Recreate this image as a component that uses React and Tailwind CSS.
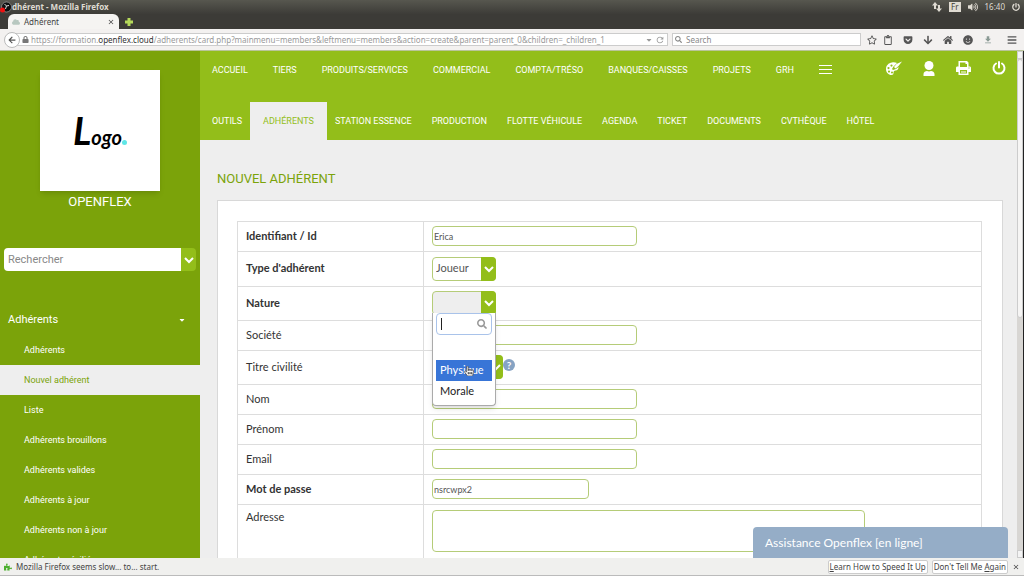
import React, { useState } from "react";
import {
  FaLock,
  FaRegStar,
  FaRegClipboard,
  FaGetPocket,
  FaArrowDown,
  FaHome,
  FaCaretDown,
  FaBars,
  FaSearch,
  FaPuzzlePiece,
  FaArrowLeft,
  FaVolumeUp,
  FaPowerOff,
  FaHandPointer,
  FaSmile,
  FaCloud,
} from "react-icons/fa";
import { MdClose, MdRefresh, MdFileDownload } from "react-icons/md";

const mainLinks = [
  "ACCUEIL",
  "TIERS",
  "PRODUITS/SERVICES",
  "COMMERCIAL",
  "COMPTA/TRÉSO",
  "BANQUES/CAISSES",
  "PROJETS",
  "GRH",
];

const subLinks = [
  "OUTILS",
  "ADHÉRENTS",
  "STATION ESSENCE",
  "PRODUCTION",
  "FLOTTE VÉHICULE",
  "AGENDA",
  "TICKET",
  "DOCUMENTS",
  "CVTHÈQUE",
  "HÔTEL",
];

const sideLinks = [
  "Adhérents",
  "Nouvel adhérent",
  "Liste",
  "Adhérents brouillons",
  "Adhérents valides",
  "Adhérents à jour",
  "Adhérents non à jour",
  "Adhérents résiliés",
];

const inputClass =
  "block h-5 rounded-[4px] border border-[#b5cc78] bg-white px-px text-[9px] text-[#555] outline-none";

const PaletteIcon = () => (
  <svg viewBox="0 0 32 28" className="h-3.5 w-4" fill="currentColor">
    <path
      fillRule="evenodd"
      d="M12 3C5 4 0 9 0 16c0 7 5 12 11 12 3 0 4-2 4-4 0-3 1-5 4-5 4 0 6-3 6-7l-5 4-6 2-2-2 3-5 7-7c-3-1-6-2-10-1ZM11 7a2.200 2.200 0 1 1 0 4.400 2.200 2.200 0 0 1 0-4.400ZM5 12a2.200 2.200 0 1 1 0 4.400 2.200 2.200 0 0 1 0-4.400ZM6 19a2.200 2.200 0 1 1 0 4.400 2.200 2.200 0 0 1 0-4.400ZM12 21a2 2 0 1 1 0 4 2 2 0 0 1 0-4Z"
    />
    <path d="M32 1 21 6l-5 6 3 3 6-5Z" />
  </svg>
);

const UserIcon = () => (
  <svg viewBox="0 0 24 30" className="h-[15px] w-3" fill="currentColor">
    <circle cx="12" cy="9" r="9" />
    <path d="M1 30v-4c0-4 4-6 7-6 2 1 6 1 8 0 3 0 7 2 7 6v4Z" />
  </svg>
);

const PrintIcon = () => (
  <svg viewBox="0 0 30 28" className="h-3.5 w-[15px]" fill="currentColor">
    <path
      fillRule="evenodd"
      d="M6 0h16l3 3v8h2c2 0 3 1 3 3v8h-5v6H5v-6H0v-8c0-2 1-3 3-3h2V0ZM8 3v9h14V6h-3V3ZM8 18v7h14v-7ZM25 13v2h2v-2Z"
    />
    <path d="M10 20h10v1H10zM10 23h10v1H10z" />
  </svg>
);

const PowerIcon = () => (
  <svg
    viewBox="0 0 28 28"
    className="h-3.5 w-3.5"
    fill="none"
    stroke="currentColor"
    strokeWidth="4"
    strokeLinecap="round"
  >
    <path d="M14 2v11M8 5a11 11 0 1 0 12 0" />
  </svg>
);

const NetworkIcon = () => (
  <svg viewBox="0 0 20 20" className="h-2.5 w-2.5" fill="currentColor">
    <path d="M6 0 0 7h4v7h4V7h4ZM14 20l6-7h-4V6h-4v7H8Z" />
  </svg>
);

const ChevronIcon = () => (
  <svg
    viewBox="0 0 10 8"
    className="h-2 w-2.5"
    fill="none"
    stroke="currentColor"
    strokeWidth="2"
  >
    <path d="M1 2l4 4 4-4" />
  </svg>
);

const BrowserBar = () => (
  <header className="shrink-0 font-['Noto_Sans','Open_Sans',sans-serif]">
    <div className="bg-linear-to-b from-[#57574f] to-[#3c3b37] to-50%">
      <div className="flex h-3.5 items-center justify-between pr-1 text-[8px] text-[#dfdbd2]">
        <div className="flex items-center font-bold">
          <svg viewBox="0 0 24 24" className="h-3 w-3">
            <circle cx="13" cy="12" r="10" fill="#111" stroke="#ccc" />
            <path d="M9 6l4 4 5-1M13 10l-2 6" stroke="#ddd" strokeWidth="2" fill="none" />
            <circle cx="5" cy="18" r="5" fill="#e11" />
          </svg>
          <span>dhérent - Mozilla Firefox</span>
        </div>
        <div className="flex items-center gap-[7px]">
          <NetworkIcon />
          <span className="flex h-2.5 items-center bg-[#dfdbd2] px-0.5 text-[8px] text-[#3c3b37]">Fr</span>
          <FaVolumeUp className="h-2.5 w-2.5" />
          <span>16:40</span>
          <FaPowerOff className="h-2 w-2" />
        </div>
      </div>
      <div className="flex h-[15px] items-center gap-1.5 pl-2">
        <div className="flex h-full w-[111px] items-center rounded-t-md bg-[#f5f4f2] px-1 text-[8px] text-[#444]">
          <FaCloud className="mr-1 h-2 w-2 text-[#b8c8c0]" />
          <span className="flex-1">Adhérent</span>
          <button aria-label="Fermer l'onglet">
            <MdClose className="h-2 w-2" />
          </button>
        </div>
        <button aria-label="Nouvel onglet" className="text-[#b5d95a]">
          <svg viewBox="0 0 8 8" className="h-2 w-2" stroke="currentColor" strokeWidth="3">
            <path d="M4 0v8M0 4h8" />
          </svg>
        </button>
      </div>
    </div>
    <div className="flex h-[22px] items-center border-b border-[#b9c49a] bg-[#f3f1f0] pr-[7px] pl-1 text-[#555]">
      <button
        aria-label="Retour"
        className="z-10 -mr-1 flex h-4 w-4 shrink-0 items-center justify-center rounded-full border border-[#bbb] bg-white"
      >
        <FaArrowLeft className="h-2 w-2" />
      </button>
      <div className="flex h-[13px] min-w-0 flex-1 items-center border border-[#ccc] bg-white pr-0.5 pl-[5px] text-[8px] text-[#999]">
        <FaLock className="mr-0.5 h-[7px] w-[7px] shrink-0 text-[#777]" />
        <span className="flex-1 whitespace-nowrap">
          https://formation.<span className="text-[#333]">openflex.cloud</span>
          /adherents/card.php?mainmenu=members&amp;leftmenu=members&amp;action=create&amp;parent=parent_0&amp;children=_children_1
        </span>
        <FaCaretDown className="mr-0.5 h-2 w-2" />
        <MdRefresh className="h-2.5 w-2.5" />
      </div>
      <div className="ml-1 flex h-[13px] w-[189px] items-center border border-[#ccc] bg-white px-0.5">
        <FaSearch className="mr-1 h-[7px] w-[7px] text-[#888]" />
        <input
          aria-label="Search"
          placeholder="Search"
          className="min-w-0 flex-1 text-[8px] outline-none placeholder:text-[#888]"
        />
      </div>
      <div className="ml-1.5 flex items-center gap-2.5">
        <FaRegStar className="h-2.5 w-2.5" />
        <FaRegClipboard className="-ml-1 h-2.5 w-2.5" />
        <FaGetPocket className="h-2.5 w-2.5" />
        <FaArrowDown className="h-2.5 w-2.5" />
        <FaHome className="h-2.5 w-2.5" />
        <FaSmile className="h-2.5 w-2.5" />
        <MdFileDownload className="h-2.5 w-2.5 text-[#8a9a94]" />
        <FaBars className="ml-1 h-2.5 w-2.5" />
      </div>
    </div>
  </header>
);

const Sidebar = () => (
  <aside className="flex w-[200px] shrink-0 flex-col bg-[#7ba30a] font-['Roboto',sans-serif] text-white">
    <div className="mx-auto mt-[19px] flex h-[121px] w-[120px] shrink-0 items-center justify-center bg-white shadow-md">
      <div className="flex items-baseline font-['Lato',sans-serif] font-bold text-black italic">
        <span className="text-[38px]">L</span>
        <span className="text-[20px]">ogo</span>
        <span className="h-[5px] w-[5px] rounded-full bg-[#5ee6e6]"></span>
      </div>
    </div>
    <p className="mt-px text-center text-[13px] leading-5">OPENFLEX</p>
    <div className="mx-1 mt-9 flex h-[23px] shrink-0 overflow-hidden rounded-[4px]">
      <input
        aria-label="Rechercher"
        placeholder="Rechercher"
        className="min-w-0 flex-1 bg-white px-1 pt-0.5 text-[11px] text-[#555] outline-none placeholder:text-[#888]"
      />
      <button
        aria-label="Lancer la recherche"
        className="flex w-[15px] items-center justify-center bg-[#93be1a]"
      >
        <ChevronIcon />
      </button>
    </div>
    <button className="mt-8 flex h-8 shrink-0 items-center justify-between px-2 pt-0.5 text-[11px]">
      Adhérents
      <FaCaretDown className="mr-1.5 h-2 w-2" />
    </button>
    <nav>
      {sideLinks.map((link, index) => (
        <a
          key={link}
          href="#"
          className={`flex h-[30px] items-center pt-0.5 pl-6 text-[9px] ${
            index === 1 ? "bg-[#eee] text-[#7ba30a]" : ""
          }`}
        >
          {link}
        </a>
      ))}
    </nav>
  </aside>
);

const TopNav = () => (
  <div className="h-[89px] shrink-0 bg-[#93be1a] pl-3 font-['Roboto',sans-serif] text-[9px] whitespace-nowrap text-white">
    <div className="flex h-[51px] items-start justify-between pr-[11px]">
      <nav className="flex h-10 items-center gap-[25px]">
        {mainLinks.map((link) => (
          <a key={link} href="#">
            {link}
          </a>
        ))}
        <button aria-label="Plus de menus" className="pb-1">
          <svg viewBox="0 0 13 10" className="h-2.5 w-[13px]" stroke="currentColor">
            <path d="M0 1.500h13M0 5.500h13M0 9.500h13" />
          </svg>
        </button>
      </nav>
      <div className="flex h-[34px] items-center gap-[21px]">
        <button aria-label="Thème">
          <PaletteIcon />
        </button>
        <button aria-label="Utilisateur">
          <UserIcon />
        </button>
        <button aria-label="Imprimer">
          <PrintIcon />
        </button>
        <button aria-label="Déconnexion">
          <PowerIcon />
        </button>
      </div>
    </div>
    <nav className="flex h-[38px] gap-5">
      {subLinks.map((link) => (
        <a
          key={link}
          href="#"
          className={`flex items-center pt-0.5 ${
            link === "ADHÉRENTS" ? "-mx-3 bg-[#eee] px-[13px] text-[#93be1a]" : ""
          }`}
        >
          {link}
        </a>
      ))}
    </nav>
  </div>
);

const SelectArrow = () => (
  <span className="pointer-events-none absolute inset-y-0 right-0 flex w-[15px] items-center justify-center rounded-r-[4px] bg-[#93be1a] text-white">
    <ChevronIcon />
  </span>
);

const NatureSelect = () => {
  const [nature, setNature] = useState("");
  const [open, setOpen] = useState(true);

  const choose = (value) => {
    setNature(value);
    setOpen(false);
  };

  return (
    <div className="relative w-16">
      <select
        id="nature"
        value={nature}
        onChange={(e) => setNature(e.target.value)}
        className="block h-6 w-full appearance-none rounded-[4px] border border-[#b5cc78] bg-[#eee] px-1 text-[10px] text-[#555]"
      >
        <option value=""></option>
        <option>Physique</option>
        <option>Morale</option>
      </select>
      <SelectArrow />
      {open && (
        <div className="absolute top-[22px] left-0 z-10 w-full rounded-b-[4px] border border-t-0 border-[#aaa] bg-white px-[3px] pb-1 text-[11px] shadow-md">
          <div className="flex h-[22px] items-center rounded-[4px] border border-[#a9c3ea] px-1">
            <span className="h-3 w-px bg-[#222]"></span>
            <input aria-label="Rechercher une nature" className="min-w-0 flex-1 outline-none" />
            <FaSearch className="h-2.5 w-2.5 text-[#999]" />
          </div>
          <div className="pt-[25px] text-[#222]">
            <button
              type="button"
              onClick={() => choose("Physique")}
              className="relative block h-[21px] w-full bg-[#3875d7] pl-1 text-left text-white"
            >
              Physique
              <FaHandPointer className="absolute top-1.5 left-7 h-2.5 w-2.5 fill-white stroke-[#444] stroke-40" />
            </button>
            <button
              type="button"
              onClick={() => choose("Morale")}
              className="block h-5 w-full pl-1 text-left"
            >
              Morale
            </button>
          </div>
        </div>
      )}
    </div>
  );
};

const Row = ({ label, id, height = "h-[30px]", bold, top, children }) => (
  <tr className={`${height} border border-[#ddd]`}>
    <th
      scope="row"
      className={`w-[186px] border-r border-[#ddd] pl-2 text-left ${bold ? "font-bold" : "font-normal"} ${
        top ? "pt-1 align-top" : "pb-px align-middle"
      }`}
    >
      <label htmlFor={id}>{label}</label>
    </th>
    <td className={`pl-2 ${top ? "pt-[5px] align-top" : "pb-px align-middle"}`}>{children}</td>
  </tr>
);

const MemberForm = () => (
  <form className="mt-[11px] mr-3.5 ml-[17px] border border-[#d8d8d8] bg-white pt-5 pr-5 pl-[19px]">
    <table className="w-full border-collapse text-[11px] text-[#333]">
      <tbody>
        <Row label="Identifiant / Id" id="login" bold>
          <input id="login" defaultValue="Erica" className={`${inputClass} w-[205px]`} />
        </Row>
        <Row label="Type d'adhérent" id="type" height="h-[35px]" bold>
          <div className="relative w-16">
            <select
              id="type"
              className="block h-6 w-full appearance-none rounded-[4px] border border-[#b5cc78] bg-white pl-[3px] text-[11px] text-[#555]"
            >
              <option>Joueur</option>
            </select>
            <SelectArrow />
          </div>
        </Row>
        <Row label="Nature" id="nature" height="h-[34px]" bold>
          <NatureSelect />
        </Row>
        <Row label="Société" id="societe">
          <input id="societe" className={`${inputClass} w-[205px]`} />
        </Row>
        <Row label="Titre civilité" id="civilite" height="h-[34px]">
          <div className="flex items-start">
            <div className="relative w-[71px]">
              <select
                id="civilite"
                className="block h-6 w-full appearance-none rounded-[4px] border border-[#b5cc78] bg-white pl-1"
              >
                <option></option>
              </select>
              <SelectArrow />
            </div>
            <span className="mt-1 flex h-3 w-3 items-center justify-center rounded-full bg-[#86a3c3] text-[10px] font-bold text-white">
              ?
            </span>
          </div>
        </Row>
        <Row label="Nom" id="nom">
          <input id="nom" className={`${inputClass} w-[205px]`} />
        </Row>
        <Row label="Prénom" id="prenom">
          <input id="prenom" className={`${inputClass} w-[205px]`} />
        </Row>
        <Row label="Email" id="email">
          <input id="email" className={`${inputClass} w-[205px]`} />
        </Row>
        <Row label="Mot de passe" id="pass" bold>
          <input id="pass" defaultValue="nsrcwpx2" className={`${inputClass} w-[157px]`} />
        </Row>
        <Row label="Adresse" id="adresse" height="h-20" top>
          <textarea
            id="adresse"
            className="block h-[42px] w-[433px] resize-none rounded-[4px] border border-[#b5cc78] bg-white outline-none"
          />
        </Row>
      </tbody>
    </table>
  </form>
);

const App = () => {
  return (
    <div className="flex h-screen flex-col overflow-hidden bg-[#eee]">
      <BrowserBar />
      <div className="flex min-h-0 flex-1 overflow-hidden">
        <Sidebar />
        <main className="relative flex min-w-0 flex-1 flex-col overflow-hidden font-['Lato',sans-serif]">
          <TopNav />
          <h1 className="mt-[29px] ml-[17px] font-['Roboto',sans-serif] text-[13px] leading-5 text-[#7ba30a]">
            NOUVEL ADHÉRENT
          </h1>
          <MemberForm />
          <button className="absolute right-[9px] bottom-0 z-20 h-[31px] w-[255px] rounded-t-[4px] bg-[#95adc7] pl-3 text-left text-[12px] text-white">
            Assistance Openflex [en ligne]
          </button>
        </main>
        <div className="flex w-[7px] shrink-0 flex-col border-r border-[#222] bg-[#d8d6d3]">
          <div className="h-2 border border-[#ccc] bg-[#f4f4f4]"></div>
          <div className="h-[259px] rounded-sm border border-[#ccc] bg-[#f6f5f4]"></div>
          <div className="mt-auto h-2 border border-[#ccc] bg-[#f4f4f4]"></div>
        </div>
      </div>
      <footer className="flex h-[18px] shrink-0 items-center border-b border-[#bbb] bg-[#f0f0ee] px-1 font-['Noto_Sans','Open_Sans',sans-serif] text-[8px] text-[#444]">
        <FaPuzzlePiece className="mr-1 h-2 w-2 text-[#4caf2f]" />
        <span className="flex-1">Mozilla Firefox seems slow... to... start.</span>
        <button className="h-3.5 rounded-[2px] border border-[#ccc] bg-white px-px">
          <u>L</u>earn How to Speed It Up
        </button>
        <button className="ml-1 h-3.5 rounded-[2px] border border-[#ccc] bg-white px-px">
          Don't Tell Me <u>A</u>gain
        </button>
        <button aria-label="Fermer" className="ml-1">
          <MdClose className="h-2 w-2" />
        </button>
      </footer>
    </div>
  );
};

export default App;
